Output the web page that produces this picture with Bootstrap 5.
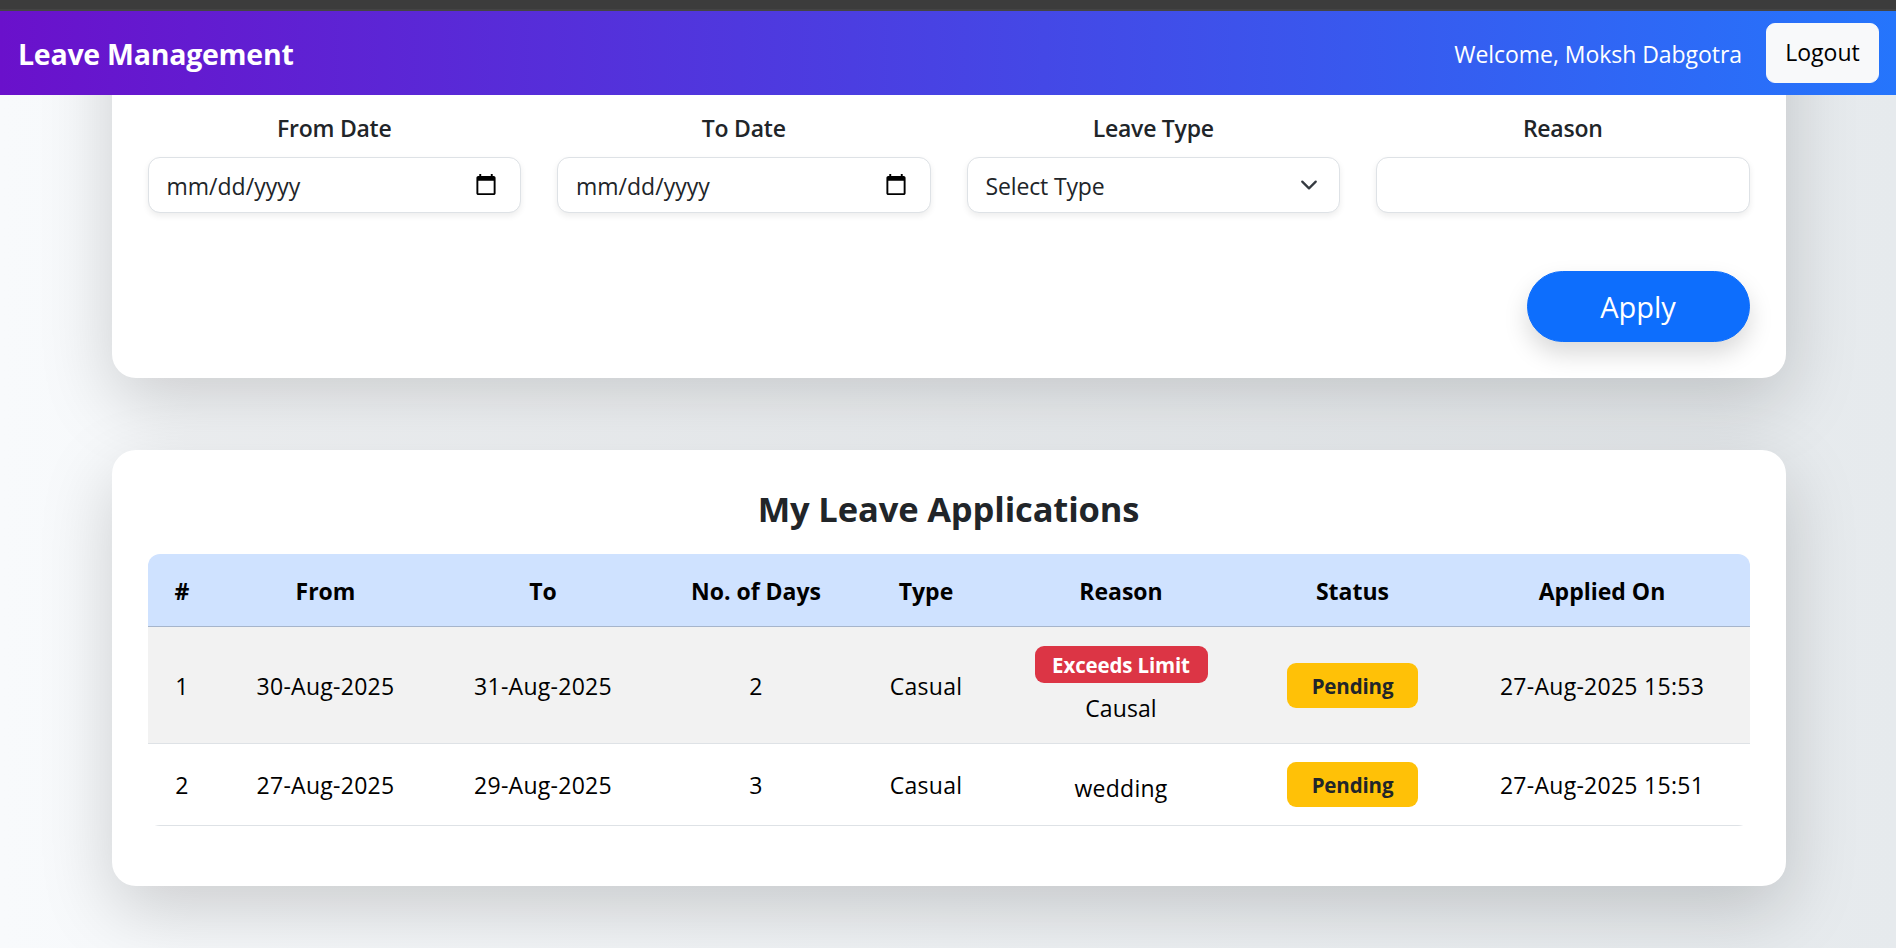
<!DOCTYPE html>
<html lang="en">
<head>
<meta charset="utf-8">
<title>Leave Management</title>
<link href="https://cdn.jsdelivr.net/npm/bootstrap@5.3.0/dist/css/bootstrap.min.css" rel="stylesheet">
<style>
html { font-size: 24px; }
body {
  --bs-box-shadow: 0 .5rem 1rem rgba(0,0,0,.15);
  --bs-box-shadow-sm: 0 .125rem .25rem rgba(0,0,0,.075);
  --bs-box-shadow-lg: 0 1rem 3rem rgba(0,0,0,.175);
  font-family: "Open Sans", "Noto Sans", sans-serif;
  height: 948px;
  overflow: hidden;
  font-size: 23px;
  line-height: 36px;
  background: linear-gradient(90deg, #f8fafc, #e6eaed);
}
.shadow { box-shadow: var(--bs-box-shadow) !important; }
.shadow-sm { box-shadow: var(--bs-box-shadow-sm) !important; }
.shadow-lg { box-shadow: var(--bs-box-shadow-lg) !important; }
.window-edge { height: 11px; background: #3c3c3c; border-bottom: 2px solid #444; position: relative; z-index: 1030; }
.leave-nav { height: 84px; background: linear-gradient(90deg, #6a11cb, #2575fc); }
.leave-nav .navbar-brand { font-size: 28.5px; letter-spacing: -.25px; padding-top: 8px; padding-bottom: 7px; }
.leave-nav .container-fluid { padding-right: 17px; }
.welcome { padding-top: 2px; letter-spacing: -.05px; }
.logout-btn { font-size: 23px; line-height: 36px; width: 113px; height: 60px; padding: 9px 0 11px; }
.page-wrap { max-width: 1710px; padding: 0 18px; position: relative; left: .5px; }
.panel { border-radius: 24px; }
.panel-form { margin-top: -130px; padding-top: 145px; }
.form-label { margin-bottom: 11px; letter-spacing: -.25px; }
.form-control, .form-select { height: 56px; font-size: 23px; line-height: 36px; padding-top: 10px; padding-bottom: 8px; }
.form-select { background-size: 24px 18px; letter-spacing: -.15px; }
.form-control::-webkit-calendar-picker-indicator { width: 24px; height: 24px; padding: 0; margin-right: 4px; margin-bottom: 3px; }
.apply-row { margin-top: 58px; }
.apply-btn { width: 223px; height: 71px; font-size: 29px; line-height: 45px; }
.panel-title { font-size: 34.5px; line-height: 43px; padding-top: 1px; margin-bottom: 24px; letter-spacing: -.14px; }
.leave-table { table-layout: fixed; border-radius: 12px; overflow: hidden; margin-bottom: 24px; }
.leave-table > :not(caption) > * > * { padding: 19px 0 17px; }
.leave-table th { letter-spacing: 0; border-bottom-color: #a6b5cc; }
.leave-table tbody tr:nth-child(1) { height: 117px; }
.leave-table tbody tr:nth-child(2) { height: 82px; }
.leave-table tbody td { padding: 0 !important; color: #000 !important; letter-spacing: .28px; }
.leave-table tbody tr:nth-child(1) td:not(:nth-child(7)) { padding-top: 2px !important; }
.badge { border-radius: 9px; font-size: 20.5px; display: inline-block; letter-spacing: -.15px; }
.badge-limit { width: 173px; height: 37px; line-height: 38px; padding: 0; }
.badge-status { width: 131px; height: 45px; line-height: 46px; padding: 0; }
.reason-text { margin-top: 7px; letter-spacing: .1px; }
</style>
</head>
<body>
<div class="window-edge"></div>
<nav class="navbar leave-nav sticky-top py-0">
  <div class="container-fluid">
    <a class="navbar-brand fw-bold text-white" href="#">Leave Management</a>
    <div class="d-flex align-items-center">
      <span class="welcome text-white me-3">Welcome, Moksh Dabgotra</span>
      <button class="btn btn-light logout-btn">Logout</button>
    </div>
  </div>
</nav>
<main class="page-wrap mx-auto">
  <section class="panel panel-form bg-white shadow-lg px-4 pb-4">
    <form>
      <div class="row gx-4 text-center">
        <div class="col-3"><label class="form-label fw-semibold d-block" for="from">From Date</label><input id="from" type="date" class="form-control rounded-3 shadow-sm"></div>
        <div class="col-3"><label class="form-label fw-semibold d-block" for="to">To Date</label><input id="to" type="date" class="form-control rounded-3 shadow-sm"></div>
        <div class="col-3"><label class="form-label fw-semibold d-block" for="type">Leave Type</label><select id="type" class="form-select rounded-3 shadow-sm"><option>Select Type</option></select></div>
        <div class="col-3"><label class="form-label fw-semibold d-block" for="reason">Reason</label><input id="reason" type="text" class="form-control rounded-3 shadow-sm"></div>
      </div>
      <div class="apply-row d-flex justify-content-end">
        <button type="button" class="btn btn-primary rounded-pill shadow apply-btn">Apply</button>
      </div>
    </form>
  </section>
  <section class="panel bg-white shadow-lg p-4 mt-5">
    <h2 class="panel-title fw-bold text-center">My Leave Applications</h2>
    <table class="table table-striped leave-table text-center align-middle">
      <colgroup><col style="width:69px"><col style="width:218px"><col style="width:217px"><col style="width:209px"><col style="width:131px"><col style="width:259px"><col style="width:204px"><col style="width:295px"></colgroup>
      <thead class="table-primary">
        <tr><th>#</th><th>From</th><th>To</th><th>No. of Days</th><th>Type</th><th>Reason</th><th>Status</th><th>Applied On</th></tr>
      </thead>
      <tbody>
        <tr><td>1</td><td>30-Aug-2025</td><td>31-Aug-2025</td><td>2</td><td>Casual</td>
          <td><span class="badge bg-danger badge-limit">Exceeds Limit</span><div class="reason-text">Causal</div></td>
          <td><span class="badge bg-warning text-dark badge-status">Pending</span></td><td>27-Aug-2025 15:53</td></tr>
        <tr><td>2</td><td>27-Aug-2025</td><td>29-Aug-2025</td><td>3</td><td>Casual</td>
          <td><div class="pt-1">wedding</div></td>
          <td><span class="badge bg-warning text-dark badge-status">Pending</span></td><td>27-Aug-2025 15:51</td></tr>
      </tbody>
    </table>
  </section>
</main>
<script src="https://cdn.jsdelivr.net/npm/bootstrap@5.3.0/dist/js/bootstrap.bundle.min.js"></script>
</body>
</html>
